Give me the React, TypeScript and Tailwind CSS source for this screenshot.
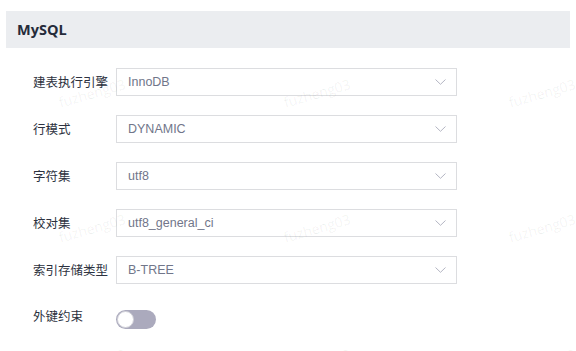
import React from "react";

const rows = [
  { label: "建表执行引擎", value: "InnoDB" },
  { label: "行模式", value: "DYNAMIC" },
  { label: "字符集", value: "utf8" },
  { label: "校对集", value: "utf8_general_ci" },
  { label: "索引存储类型", value: "B-TREE" },
];

const marks: { x: number; y: number }[] = [];
[93, 228, 363].forEach((y) => {
  [92, 317, 542].forEach((x) => marks.push({ x, y }));
});

function Chevron() {
  return (
    <svg width="11" height="6" viewBox="0 0 11 6" fill="none">
      <path d="M0.5 0.5 L5.5 5.3 L10.5 0.5" stroke="#b4b6c3" strokeWidth="1" />
    </svg>
  );
}

export default function App() {
  return (
    <div className="relative w-[576px] h-[351px] overflow-hidden bg-white">
      <div className="mt-[11px] mx-[6px] h-[37px] bg-[#ebedf0] pl-[11px] flex items-center">
        <span
          className="text-[14.5px] font-bold text-[#252b3a]"
          style={{ fontFamily: '"Open Sans", sans-serif' }}
        >
          MySQL
        </span>
      </div>
      <div className="mt-[20px] pl-[33px] flex flex-col gap-[19px]">
        {rows.map((r) => (
          <div key={r.label} className="flex items-center h-[28px]">
            <div
              className="w-[83px] text-[12.5px] text-[#2d3240] whitespace-nowrap"
              style={{ fontFamily: '"Noto Sans CJK SC", sans-serif' }}
            >
              {r.label}
            </div>
            <div className="w-[341px] h-[28px] border border-[#dcdde0] bg-white flex items-center justify-between pl-[11px] pr-[10px]">
              <span
                className="text-[12.5px] text-[#71768a]"
                style={{ fontFamily: '"Liberation Sans", Arial, sans-serif' }}
              >
                {r.value}
              </span>
              <Chevron />
            </div>
          </div>
        ))}
        <div className="flex items-start h-[28px] mt-[7px]">
          <div
            className="w-[83px] text-[12.5px] text-[#2d3240] whitespace-nowrap -mt-[3px]"
            style={{ fontFamily: '"Noto Sans CJK SC", sans-serif' }}
          >
            外键约束
          </div>
          <div className="w-[40px] h-[19px] rounded-full bg-[#abaabd] flex items-center pl-[1px]">
            <div className="w-[17px] h-[17px] rounded-full bg-white border border-[#d0d0d8]" />
          </div>
        </div>
      </div>
      <div className="absolute inset-0 pointer-events-none">
        {marks.map((m, i) => (
          <div
            key={i}
            className="absolute text-[14px] whitespace-nowrap text-[rgba(0,0,0,0.06)]"
            style={{
              left: m.x,
              top: m.y,
              transform: "translate(-50%, -50%) rotate(-16deg)",
              fontFamily: '"Open Sans", sans-serif',
            }}
          >
            fuzheng03
          </div>
        ))}
      </div>
    </div>
  );
}
